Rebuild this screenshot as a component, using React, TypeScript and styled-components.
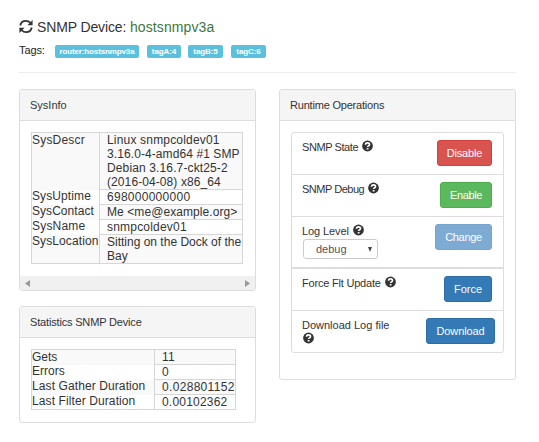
import React from "react";
import styled, { createGlobalStyle } from "styled-components";

const Global = createGlobalStyle`
  * { box-sizing: border-box; }
  body { margin: 0; background: #fff; color: #333; font: 12px/14px "Liberation Sans", Arial, sans-serif; overflow: hidden; }
`;
const Page = styled.main`width: 539px; height: 442px; padding: 17px 0 0 19px; overflow: hidden;`;
const Title = styled.h1`
  display: flex; align-items: center; height: 20px; margin: 0;
  font-size: 14px; font-weight: 400; line-height: 20px; white-space: pre;
  svg { margin: -2px 4px 0 0; }
`;
const Ink = styled.span<{ $ls?: number }>`letter-spacing: ${p => p.$ls ?? 0}px; white-space: pre;`;
const Host = styled(Ink)`color: #3c763d;`;
const Tags = styled.div`display: flex; align-items: center; height: 14px; margin-top: 6px; font-size: 11px;`;
const TagsLabel = styled.span`width: 36px; letter-spacing: -.1px; color: #222;`;
const Tag = styled.span<{ $w: number; $gap: number; $ls: number }>`
  width: ${p => p.$w}px; height: 13px; margin: 3px ${p => p.$gap}px 0 0; border-radius: 2px;
  background: #5bc0de; color: #fff; font-size: 8px; font-weight: 700; line-height: 13px;
  text-align: center; letter-spacing: ${p => p.$ls}px; white-space: nowrap;
`;
const Rule = styled.hr`width: 497px; height: 1px; margin: 15px 0 16px; border: 0; background: #eee;`;
const Columns = styled.div`display: flex; align-items: flex-start; gap: 23px;`;
const Stack = styled.div`display: flex; flex-direction: column; gap: 15px;`;
const Panel = styled.section<{ $h: number }>`
  display: flex; flex-direction: column; width: 237px; height: ${p => p.$h}px;
  border: 1px solid #ddd; border-radius: 3px; overflow: hidden;
`;
const PanelHead = styled.header`
  height: 31px; flex: none; padding: 0 10px; border-bottom: 1px solid #ddd;
  background: #f5f5f5; font-size: 11px; line-height: 31px;
`;
const PanelBody = styled.div`flex: 1; padding: 11px;`;
const Grid = styled.div<{ $w: number }>`width: ${p => p.$w}px; border: 1px solid #d6d6d6;`;
const Row = styled.div<{ $label: number; $h: number }>`
  display: grid; grid-template-columns: ${p => p.$label}px 1fr; height: ${p => p.$h}px;
  &:nth-child(odd) { background: #f9f9f9; }
`;
const Key = styled.div`
  white-space: nowrap;
  ${Row}:not(:first-child) > & { margin-top: -1px; }
`;
const Value = styled.div`
  padding-left: 7px; border-left: 1px solid #d6d6d6; white-space: nowrap;
  ${Row}:not(:last-child) > & { border-bottom: 1px solid #d6d6d6; }
`;
const Line = styled(Ink)`display: block; height: 14px;`;
const Scrollbar = styled.div`
  display: flex; align-items: center; justify-content: space-between; flex: none;
  height: 14px; padding: 0 5px; background: #f0f0f0;
`;
const Operations = styled.div`width: 213px; border: 1px solid #ddd; border-radius: 3px;`;
const Operation = styled.div<{ $h: number; $thick?: boolean; $right?: number }>`
  display: flex; justify-content: space-between; height: ${p => p.$h}px;
  padding: 7px ${p => p.$right ?? 11}px 0 10px; font-size: 11px;
  border-bottom: ${p => (p.$thick ? 2 : 1)}px solid #ddd;
  &:last-child { border-bottom: 0; }
`;
const OperationLabel = styled.div`
  display: flex; flex-wrap: wrap; align-content: flex-start; width: 100px; line-height: 14px;
  svg { margin-left: 4px; }
`;
const HelpBelow = styled.div`width: 100%; height: 13px; svg { margin-left: 1px; }`;
const Select = styled.div`
  display: flex; align-items: center; justify-content: space-between;
  width: 75px; height: 20px; margin: 1px 0 0 1px; padding: 0 5px 0 12px;
  border: 1px solid #ccc; border-radius: 3px; color: #555;
`;
const Button = styled.button<{ $w: number; $bg: string; $edge: string; $ls?: number }>`
  width: ${p => p.$w}px; height: 26px; flex: none; padding: 0;
  border: 1px solid ${p => p.$edge}; border-radius: 3px; background: ${p => p.$bg}; color: #fff;
  font: 11px/24px "Liberation Sans", Arial, sans-serif; text-align: center; letter-spacing: ${p => p.$ls ?? 0}px;
`;

const Refresh = () => (
  <svg width="14" height="15" viewBox="0 0 14 15">
    <path d="M1.300 6.500C1.800 3.300 4.200 1.800 7 1.800c1.800 0 3 .7 4.200 1.900M12.700 8.500c-.5 3.200-2.900 4.700-5.700 4.700-1.800 0-3-.7-4.200-1.900" fill="none" stroke="#333" strokeWidth="1.800" />
    <path d="M13.600 1v5.200H8.400zM.4 14V8.800h5.200z" fill="#333" />
  </svg>
);
const Help = () => (
  <svg width="11" height="12" viewBox="0 0 11 12">
    <circle cx="5.5" cy="6" r="5.4" fill="#333" />
    <path d="M3.500 4.800c0-2.700 4-2.500 4-.4 0 1.500-1.900 1.500-1.900 2.700" fill="none" stroke="#fff" strokeWidth="1.700" />
    <path d="M4.700 8h1.800v1.600H4.700z" fill="#fff" />
  </svg>
);
const Arrow = ({ d, w = 5, h = 7, fill = "#999" }: { d: string; w?: number; h?: number; fill?: string }) => (
  <svg width={w} height={h} viewBox={`0 0 ${w} ${h}`}><path d={d} fill={fill} /></svg>
);

type Item = { key: string; lines: string[]; h: number; kls?: number; ls?: number[] };
const sysInfo: Item[] = [
  { key: "SysDescr", h: 57, kls: 0.2, ls: [0.18, 0.09, 0.13, 0.09], lines: ["Linux snmpcoldev01", "3.16.0-4-amd64 #1 SMP", "Debian 3.16.7-ckt25-2", "(2016-04-08) x86_64"] },
  { key: "SysUptime", h: 15, kls: 0.1, ls: [0.27], lines: ["698000000000"] },
  { key: "SysContact", h: 15, kls: 0.05, ls: [0.08], lines: ["Me <me@example.org>"] },
  { key: "SysName", h: 15, kls: 0.2, ls: [0.2], lines: ["snmpcoldev01"] },
  { key: "SysLocation", h: 28, kls: 0.1, ls: [0, 0], lines: ["Sitting on the Dock of the", "Bay"] },
];
const stats: Item[] = [
  { key: "Gets", h: 15, kls: 0, ls: [0.3], lines: ["11"] },
  { key: "Errors", h: 15, kls: 0, ls: [0.3], lines: ["0"] },
  { key: "Last Gather Duration", h: 15, kls: 0.1, ls: [0.32], lines: ["0.028801152"] },
  { key: "Last Filter Duration", h: 14, kls: 0.1, ls: [0.2], lines: ["0.00102362"] },
];
const DataTable = ({ items, width, label }: { items: Item[]; width: number; label: number }) => (
  <Grid $w={width}>
    {items.map(item => (
      <Row key={item.key} $label={label} $h={item.h}>
        <Key><Ink $ls={item.kls}>{item.key}</Ink></Key>
        <Value>{item.lines.map((line, i) => <Line key={line} $ls={item.ls?.[i]}>{line}</Line>)}</Value>
      </Row>
    ))}
  </Grid>
);

export default function App() {
  return (
    <Page>
      <Global />
      <Title><Refresh /><Ink $ls={-0.13}>SNMP Device: </Ink><Host $ls={0.1}>hostsnmpv3a</Host></Title>
      <Tags>
        <TagsLabel>Tags:</TagsLabel>
        <Tag $w={84} $gap={8} $ls={-0.13}>router:hostsnmpv3a</Tag>
        <Tag $w={34} $gap={7} $ls={-0.1}>tagA:4</Tag>
        <Tag $w={35} $gap={8} $ls={-0.1}>tagB:5</Tag>
        <Tag $w={35} $gap={0} $ls={-0.1}>tagC:6</Tag>
      </Tags>
      <Rule />
      <Columns>
        <Stack>
          <Panel $h={202}>
            <PanelHead><Ink>SysInfo</Ink></PanelHead>
            <PanelBody><DataTable items={sysInfo} width={212} label={67} /></PanelBody>
            <Scrollbar><Arrow d="M5 0V7L0 3.500z" /><Arrow d="M0 0V7L5 3.500z" /></Scrollbar>
          </Panel>
          <Panel $h={117}>
            <PanelHead><Ink $ls={-0.17}>Statistics SNMP Device</Ink></PanelHead>
            <PanelBody><DataTable items={stats} width={205} label={122} /></PanelBody>
          </Panel>
        </Stack>
        <Panel $h={291}>
          <PanelHead><Ink $ls={-0.2}>Runtime Operations</Ink></PanelHead>
          <PanelBody>
            <Operations>
              <Operation $h={42}>
                <OperationLabel><Ink $ls={-0.42}>SNMP State</Ink><Help /></OperationLabel>
                <Button $w={55} $bg="#d9534f" $edge="#d43f3a" $ls={-0.15}>Disable</Button>
              </Operation>
              <Operation $h={42}>
                <OperationLabel><Ink $ls={-0.48}>SNMP Debug</Ink><Help /></OperationLabel>
                <Button $w={52} $bg="#5cb85c" $edge="#4cae4c" $ls={-0.4}>Enable</Button>
              </Operation>
              <Operation $h={52} $thick>
                <OperationLabel>
                  <Ink $ls={-0.1}>Log Level</Ink><Help />
                  <Select><Ink>debug</Ink><Arrow w={4} h={5} d="M0 0H4L2 5z" fill="#444" /></Select>
                </OperationLabel>
                <Button $w={57} $bg="#7dabd4" $edge="#78a4cb" $ls={-0.3}>Change</Button>
              </Operation>
              <Operation $h={42}>
                <OperationLabel><Ink $ls={-0.2}>Force Flt Update</Ink><Help /></OperationLabel>
                <Button $w={48} $bg="#337ab7" $edge="#2e6da4">Force</Button>
              </Operation>
              <Operation $h={41} $right={8}>
                <OperationLabel><Ink>Download Log file</Ink><HelpBelow><Help /></HelpBelow></OperationLabel>
                <Button $w={69} $bg="#337ab7" $edge="#2e6da4" $ls={-0.1}>Download</Button>
              </Operation>
            </Operations>
          </PanelBody>
        </Panel>
      </Columns>
    </Page>
  );
}
